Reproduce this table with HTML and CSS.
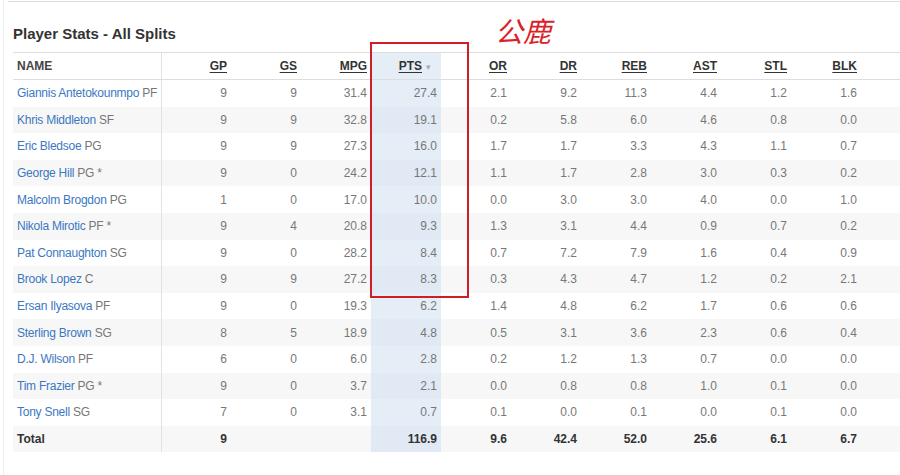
FILE: index.html
```html
<!DOCTYPE html>
<html lang="en">
<head>
<meta charset="utf-8">
<title>Player Stats - All Splits</title>
<link rel="stylesheet" href="styles.css">
</head>
<body>
<div class="page">
  <div class="topline"></div>
  <h2 class="title">Player Stats - All Splits</h2>
  <table class="stats">
    <colgroup>
      <col class="c-name"><col class="c-num"><col class="c-num"><col class="c-num"><col class="c-num sorted"><col class="c-num"><col class="c-num"><col class="c-num"><col class="c-num"><col class="c-num"><col class="c-num"><col>
    </colgroup>
    <thead>
      <tr>
        <th class="name">NAME</th>
        <th><span class="sort">GP</span></th>
        <th><span class="sort">GS</span></th>
        <th><span class="sort">MPG</span></th>
        <th class="pts"><span class="sort">PTS</span><span class="arrow">▾</span></th>
        <th><span class="sort">OR</span></th>
        <th><span class="sort">DR</span></th>
        <th><span class="sort">REB</span></th>
        <th><span class="sort">AST</span></th>
        <th><span class="sort">STL</span></th>
        <th><span class="sort">BLK</span></th>
        <th class="rest"></th>
      </tr>
    </thead>
    <tbody>
      <tr><td class="name"><a>Giannis Antetokounmpo</a> PF</td><td>9</td><td>9</td><td>31.4</td><td class="pts">27.4</td><td>2.1</td><td>9.2</td><td>11.3</td><td>4.4</td><td>1.2</td><td>1.6</td><td></td></tr>
      <tr><td class="name"><a>Khris Middleton</a> SF</td><td>9</td><td>9</td><td>32.8</td><td class="pts">19.1</td><td>0.2</td><td>5.8</td><td>6.0</td><td>4.6</td><td>0.8</td><td>0.0</td><td></td></tr>
      <tr><td class="name"><a>Eric Bledsoe</a> PG</td><td>9</td><td>9</td><td>27.3</td><td class="pts">16.0</td><td>1.7</td><td>1.7</td><td>3.3</td><td>4.3</td><td>1.1</td><td>0.7</td><td></td></tr>
      <tr><td class="name"><a>George Hill</a> PG *</td><td>9</td><td>0</td><td>24.2</td><td class="pts">12.1</td><td>1.1</td><td>1.7</td><td>2.8</td><td>3.0</td><td>0.3</td><td>0.2</td><td></td></tr>
      <tr><td class="name"><a>Malcolm Brogdon</a> PG</td><td>1</td><td>0</td><td>17.0</td><td class="pts">10.0</td><td>0.0</td><td>3.0</td><td>3.0</td><td>4.0</td><td>0.0</td><td>1.0</td><td></td></tr>
      <tr><td class="name"><a>Nikola Mirotic</a> PF *</td><td>9</td><td>4</td><td>20.8</td><td class="pts">9.3</td><td>1.3</td><td>3.1</td><td>4.4</td><td>0.9</td><td>0.7</td><td>0.2</td><td></td></tr>
      <tr><td class="name"><a>Pat Connaughton</a> SG</td><td>9</td><td>0</td><td>28.2</td><td class="pts">8.4</td><td>0.7</td><td>7.2</td><td>7.9</td><td>1.6</td><td>0.4</td><td>0.9</td><td></td></tr>
      <tr><td class="name"><a>Brook Lopez</a> C</td><td>9</td><td>9</td><td>27.2</td><td class="pts">8.3</td><td>0.3</td><td>4.3</td><td>4.7</td><td>1.2</td><td>0.2</td><td>2.1</td><td></td></tr>
      <tr><td class="name"><a>Ersan Ilyasova</a> PF</td><td>9</td><td>0</td><td>19.3</td><td class="pts">6.2</td><td>1.4</td><td>4.8</td><td>6.2</td><td>1.7</td><td>0.6</td><td>0.6</td><td></td></tr>
      <tr><td class="name"><a>Sterling Brown</a> SG</td><td>8</td><td>5</td><td>18.9</td><td class="pts">4.8</td><td>0.5</td><td>3.1</td><td>3.6</td><td>2.3</td><td>0.6</td><td>0.4</td><td></td></tr>
      <tr><td class="name"><a>D.J. Wilson</a> PF</td><td>6</td><td>0</td><td>6.0</td><td class="pts">2.8</td><td>0.2</td><td>1.2</td><td>1.3</td><td>0.7</td><td>0.0</td><td>0.0</td><td></td></tr>
      <tr><td class="name"><a>Tim Frazier</a> PG *</td><td>9</td><td>0</td><td>3.7</td><td class="pts">2.1</td><td>0.0</td><td>0.8</td><td>0.8</td><td>1.0</td><td>0.1</td><td>0.0</td><td></td></tr>
      <tr><td class="name"><a>Tony Snell</a> SG</td><td>7</td><td>0</td><td>3.1</td><td class="pts">0.7</td><td>0.1</td><td>0.0</td><td>0.1</td><td>0.0</td><td>0.1</td><td>0.0</td><td></td></tr>
      <tr class="total"><td class="name">Total</td><td>9</td><td></td><td></td><td class="pts">116.9</td><td>9.6</td><td>42.4</td><td>52.0</td><td>25.6</td><td>6.1</td><td>6.7</td><td></td></tr>
    </tbody>
  </table>
  <div class="highlight"></div>
  <div class="note">公鹿</div>
</div>
</body>
</html>
```
FILE: styles.css
```css
html, body {
  margin: 0;
  padding: 0;
  background: #fff;
}
body {
  font-family: "Liberation Sans", Arial, sans-serif;
  font-size: 12px;
  color: #777;
}
.page {
  position: relative;
  width: 897px;
  height: 475px;
  overflow: hidden;
  box-sizing: border-box;
  padding: 1px 0 0 9px;
  border-left: 1px solid #eeeeee;
  margin-left: 3px;
}
.topline {
  margin-left: -5px;
  border-top: 1px solid #dcdcdc;
  height: 0;
}
.title {
  margin: 22px 0 0 0;
  font-size: 15px;
  line-height: 20px;
  font-weight: bold;
  color: #333;
}
.stats {
  margin-top: 8px;
  border-collapse: collapse;
  width: 887px;
  table-layout: fixed;
}
.c-name { width: 148px; }
.c-num { width: 70px; }
.stats th, .stats td {
  padding: 0 4px 0 4px;
  text-align: right;
  white-space: nowrap;
  overflow: hidden;
}
.stats th {
  height: 26px;
  border-top: 1px solid #dddddd;
  border-bottom: 1px solid #dddddd;
  font-weight: bold;
  color: #333;
  font-size: 12px;
}
.stats td {
  height: 26.6px;
}
.stats td.name {
  letter-spacing: -0.25px;
}
.stats .name {
  text-align: left;
  border-right: 1px solid #e2e2e2;
  color: #777;
}
.stats th.name { color: #444; }
.stats a {
  color: #3a78c2;
  text-decoration: none;
}
.sort {
  text-decoration: underline;
  text-underline-offset: 2px;
}
.arrow {
  color: #aaa;
  font-size: 9px;
  font-weight: normal;
  margin-left: 4px;
  margin-right: 1px;
}
.stats th.pts { padding-right: 9px; }
.stats .pts { background: #e5edf7; }
.stats tbody tr:nth-child(even) td { background-color: #f7f7f7; }
.stats tbody tr:nth-child(even) td.pts { background-color: #e1e9f4; }
.stats tr.total td {
  font-weight: bold;
  color: #333;
  letter-spacing: 0;
}
.stats tr.total td.name { color: #333; }
.highlight {
  position: absolute;
  left: 366px;
  top: 42px;
  width: 95px;
  height: 252px;
  border: 2px solid #cc1f27;
}
.note {
  position: absolute;
  left: 491px;
  top: 13px;
  font-family: "Noto Sans CJK SC", sans-serif;
  font-size: 28px;
  line-height: 34px;
  font-style: italic;
  font-weight: 400;
  color: #d9232a;
}
```
